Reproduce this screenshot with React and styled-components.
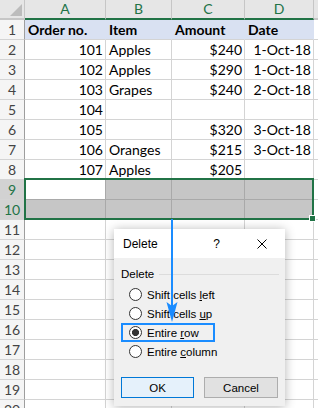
import React from "react";
import styled, { createGlobalStyle, css } from "styled-components";

const GlobalStyle = createGlobalStyle`
  html, body {
    margin: 0;
    padding: 0;
    background: #fff;
  }
  body {
    font-family: Lato, "Liberation Sans", sans-serif;
    overflow: hidden;
  }
`;

const GREEN = "#217346";
const BLUE = "#1a8cff";

const rows = [
  ["Order no.", "Item", "Amount", "Date"],
  ["101", "Apples", "$240", "1-Oct-18"],
  ["102", "Apples", "$290", "1-Oct-18"],
  ["103", "Grapes", "$240", "2-Oct-18"],
  ["104", "", "", ""],
  ["105", "", "$320", "3-Oct-18"],
  ["106", "Oranges", "$215", "3-Oct-18"],
  ["107", "Apples", "$205", ""],
];

const colAlign = ["right", "left", "right", "right"];

const Sheet = styled.div`
  position: relative;
  width: 318px;
  height: 408px;
  overflow: hidden;
  display: grid;
  grid-template-columns: 25px 81px 66px 73px 69px 1fr;
  grid-auto-rows: 20px;
  font-size: 14px;
  color: #000;
`;

const Corner = styled.div`
  position: relative;
  background: #e6e6e6;
  border-right: 1px solid #c6c6c6;
  border-bottom: 2px solid #c6c6c6;
  box-sizing: border-box;
  &::after {
    content: "";
    position: absolute;
    right: 2px;
    bottom: 2px;
    border-style: solid;
    border-width: 0 0 12px 12px;
    border-color: transparent transparent #bcbcbc transparent;
  }
`;

const ColHead = styled.div`
  box-sizing: border-box;
  background: #e6e6e6;
  border-right: 1px solid #c6c6c6;
  border-bottom: 2px solid ${(p) => (p.$sel ? GREEN : "#c6c6c6")};
  color: ${(p) => (p.$sel ? GREEN : "#444")};
  text-align: center;
  line-height: 18px;
`;

const RowHead = styled.div`
  box-sizing: border-box;
  background: ${(p) => (p.$sel ? "#d2d2d2" : "#f5f5f5")};
  color: ${(p) => (p.$sel ? GREEN : "#444")};
  border-right: 1px solid #9e9e9e;
  border-bottom: 1px solid #d4d4d4;
  text-align: center;
  line-height: 19px;
`;

const tones = {
  plain: css`
    background: #fff;
    border-right: 1px solid #d4d4d4;
    border-bottom: 1px solid #d4d4d4;
  `,
  blue: css`
    background: #d9e1f2;
    border-right: 1px solid #d9e1f2;
    border-bottom: 1px solid #d4d4d4;
  `,
  sel: css`
    background: #c6c6c6;
    border-right: 1px solid #a9a9a9;
    border-bottom: 1px solid #a9a9a9;
  `,
  active: css`
    background: #fff;
    border-right: 1px solid #a9a9a9;
    border-bottom: 1px solid #a9a9a9;
  `,
};

const Cell = styled.div`
  box-sizing: border-box;
  ${(p) => tones[p.$tone || "plain"]}
  text-align: ${(p) => p.$align || "left"};
  font-weight: ${(p) => (p.$bold ? 700 : 400)};
  padding: 0 2px 0 3px;
  line-height: 19px;
  white-space: nowrap;
  overflow: hidden;
`;

const Selection = styled.div`
  position: absolute;
  left: 24px;
  top: 178px;
  width: 290px;
  height: 42px;
  box-sizing: border-box;
  border: 2px solid ${GREEN};
  pointer-events: none;
  &::after {
    content: "";
    position: absolute;
    right: -4px;
    bottom: -4px;
    width: 5px;
    height: 5px;
    background: ${GREEN};
    border: 1px solid #fff;
  }
`;

const Dialog = styled.div`
  position: absolute;
  left: 114px;
  top: 229px;
  width: 171px;
  height: 177px;
  display: flex;
  flex-direction: column;
  background: #f0f0f0;
  box-shadow: 0 1px 10px rgba(0, 0, 0, 0.3);
  font-family: "Liberation Sans", Arial, sans-serif;
  font-size: 11.5px;
  color: #000;
`;

const TitleBar = styled.div`
  height: 29px;
  display: flex;
  align-items: center;
  padding-left: 9px;
  background: #fff;
  font-size: 12px;
`;

const Title = styled.span`
  flex: 1;
`;

const Help = styled.span`
  margin-right: 37px;
  font-size: 12px;
`;

const Close = styled.svg`
  width: 10px;
  height: 10px;
  margin-right: 18px;
`;

const Body = styled.div`
  flex: 1;
  padding: 9px 6px 0 7px;
  display: flex;
  flex-direction: column;
`;

const GroupHead = styled.div`
  height: 14px;
  display: flex;
  align-items: center;
  gap: 5px;
`;

const Rule = styled.div`
  flex: 1;
  height: 1px;
  background: #dcdcdc;
`;

const RadioList = styled.div`
  margin-top: 4px;
  display: flex;
  flex-direction: column;
  align-items: flex-start;
`;

const RadioRow = styled.div`
  height: 19px;
  box-sizing: border-box;
  display: flex;
  align-items: center;
  gap: 5px;
  padding: 0 14px 0 6px;
  border: 2px solid ${(p) => (p.$focus ? BLUE : "transparent")};
`;

const Radio = styled.span`
  width: 13px;
  height: 13px;
  box-sizing: border-box;
  border-radius: 50%;
  border: 1px solid #333;
  background: ${(p) =>
    p.$checked ? "radial-gradient(circle, #333 0 3.3px, #fff 3.8px)" : "#fff"};
`;

const Key = styled.span`
  text-decoration: underline;
`;

const Buttons = styled.div`
  margin-top: 16px;
  display: flex;
  gap: 10px;
`;

const Button = styled.div`
  width: ${(p) => (p.$primary ? "73px" : "74px")};
  height: 21px;
  box-sizing: border-box;
  display: flex;
  align-items: center;
  justify-content: center;
  background: ${(p) => (p.$primary ? "#e5f1fb" : "#e1e1e1")};
  border: 1px solid ${(p) => (p.$primary ? "#0078d7" : "#adadad")};
`;

const Arrow = styled.svg`
  position: absolute;
  left: 166px;
  top: 219px;
  width: 12px;
  height: 104px;
`;

const options = [
  { label: <>Shift cells <Key>l</Key>eft</> },
  { label: <>Shift cells <Key>u</Key>p</> },
  { label: <>Entire <Key>r</Key>ow</>, checked: true },
  { label: <>Entire <Key>c</Key>olumn</> },
];

export default function App() {
  const body = [];
  for (let n = 1; n <= 20; n++) {
    const data = rows[n - 1] || ["", "", "", ""];
    const sel = n === 9 || n === 10;
    body.push(
      <RowHead key={`h${n}`} $sel={sel}>
        {n}
      </RowHead>
    );
    data.forEach((v, i) => {
      let tone = "plain";
      if (n === 1) tone = "blue";
      if (sel) tone = n === 9 && i === 0 ? "active" : "sel";
      body.push(
        <Cell
          key={`c${n}-${i}`}
          $tone={tone}
          $bold={n === 1}
          $align={n === 1 ? "left" : colAlign[i]}
        >
          {v}
        </Cell>
      );
    });
    body.push(<Cell key={`e${n}`} />);
  }

  return (
    <>
      <GlobalStyle />
      <Sheet>
        <Corner />
        {["A", "B", "C", "D"].map((c) => (
          <ColHead key={c} $sel>
            {c}
          </ColHead>
        ))}
        <ColHead />
        {body}
        <Selection />
        <Dialog>
          <TitleBar>
            <Title>Delete</Title>
            <Help>?</Help>
            <Close viewBox="0 0 10 10">
              <path d="M0.5 0.5 L9.5 9.5 M9.5 0.5 L0.5 9.5" stroke="#000" strokeWidth="1" />
            </Close>
          </TitleBar>
          <Body>
            <GroupHead>
              <span>Delete</span>
              <Rule />
            </GroupHead>
            <RadioList>
              {options.map((o, i) => (
                <RadioRow key={i} $focus={o.checked}>
                  <Radio $checked={o.checked} />
                  <span>{o.label}</span>
                </RadioRow>
              ))}
            </RadioList>
            <Buttons>
              <Button $primary>OK</Button>
              <Button>Cancel</Button>
            </Buttons>
          </Body>
        </Dialog>
        <Arrow viewBox="0 0 12 104">
          <line x1="6" y1="0" x2="6" y2="88" stroke={BLUE} strokeWidth="2" />
          <path d="M6 103 L0.5 83 L6 87 L11.5 83 Z" fill={BLUE} />
        </Arrow>
      </Sheet>
    </>
  );
}
